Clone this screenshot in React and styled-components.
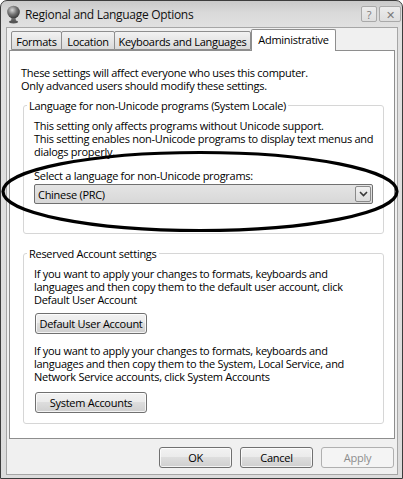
import styled, { createGlobalStyle } from 'styled-components'

const GlobalStyle = createGlobalStyle`
  html, body { margin: 0; padding: 0; background: #ffffff; }
  body {
    font-family: "Open Sans", "Noto Sans", sans-serif;
    font-size: 11px;
    letter-spacing: -0.28px;
    color: #000;
  }
  * { box-sizing: border-box; }
`

const Window = styled.div`
  position: relative;
  width: 403px;
  height: 479px;
  border: 1px solid #3c3c3c;
  border-radius: 7px 7px 0 0;
  background: linear-gradient(180deg, #c9c9c9 0, #dadada 12px, #e1e1e1 26px, #dcdcdc 100%);
  padding: 0 4px 3px 5px;
  display: flex;
  flex-direction: column;
`

const TitleBar = styled.div`
  height: 26px;
  display: flex;
  align-items: center;
  gap: 4px;
`

const Title = styled.span`
  font-size: 12px;
  color: #111;
  letter-spacing: -0.3px;
`

const TitleButtons = styled.div`
  margin-left: auto;
  margin-right: -3px;
  align-self: flex-start;
  margin-top: 5px;
  display: flex;
  gap: 2px;
`

const TitleButton = styled.div`
  width: ${p => p.w}px;
  height: 16px;
  border: 1px solid #a9a9a9;
  border-radius: 2px;
  background: linear-gradient(#ececec, #dedede);
  display: flex;
  align-items: center;
  justify-content: center;
  color: #7a7a7a;
  font-size: 11px;
`

const Client = styled.div`
  flex: 1;
  border: 1px solid #a6a6a6;
  background: #f0f0f0;
  padding: 1px 2px 0 2px;
  display: flex;
  flex-direction: column;
`

const TabStrip = styled.div`
  height: 21px;
  display: flex;
  align-items: flex-end;
  padding-left: 2px;
  position: relative;
  z-index: 1;
`

const Tab = styled.div`
  width: ${p => p.w}px;
  height: ${p => (p.active ? 22 : 19)}px;
  margin-left: ${p => (p.first || p.active ? 0 : -1)}px;
  margin-bottom: ${p => (p.active ? -1 : 0)}px;
  border: 1px solid #8e8e8e;
  border-bottom: ${p => (p.active ? 'none' : '1px solid #8e8e8e')};
  border-radius: 2px 2px 0 0;
  background: ${p => (p.active ? '#ffffff' : 'linear-gradient(#f2f2f2, #e6e6e6 50%, #dadada)')};
  display: flex;
  align-items: ${p => (p.active ? 'flex-start' : 'center')};
  padding-top: ${p => (p.active ? 2 : 1)}px;
  justify-content: center;
  white-space: nowrap;
`

const Panel = styled.div`
  height: 389px;
  border: 1px solid #8e8e8e;
  background: #ffffff;
  padding: 15px 10px 0 11px;
`

const Text = styled.div`
  line-height: 13px;
  margin-top: ${p => p.mt || 0}px;
  white-space: nowrap;
`

const Group = styled.div`
  margin: ${p => p.mt}px 0 0 2px;
  border: 1px solid #d6d6d6;
  border-radius: 3px;
  padding: 0 10px ${p => p.pb}px 10px;
`

const GroupLabel = styled.div`
  width: fit-content;
  margin: -7px 0 0 -7px;
  padding: 0 2px;
  background: #ffffff;
  line-height: 13px;
`

const Combo = styled.div`
  margin-top: 2px;
  height: 20px;
  border: 1px solid #707070;
  border-radius: 2px;
  background: linear-gradient(#e4e4e4, #d8d8d8);
  display: flex;
  align-items: center;
  padding-left: 3px;
`

const ComboArrow = styled.div`
  margin-left: auto;
  margin-right: 1px;
  width: 16px;
  height: 16px;
  border: 1px solid #8a8a8a;
  border-radius: 2px;
  background: linear-gradient(#f0f0f0, #dddddd);
  display: flex;
  align-items: center;
  justify-content: center;
`

const Button = styled.button`
  display: block;
  width: ${p => p.w}px;
  height: 21px;
  margin: ${p => p.mt || 0}px 0 0 ${p => p.ml || 0}px;
  padding: 0;
  font: inherit;
  letter-spacing: inherit;
  color: #000;
  border: 1px solid #707070;
  border-radius: 3px;
  background: linear-gradient(#f2f2f2 0%, #ebebeb 45%, #dddddd 50%, #cfcfcf 100%);
  box-shadow: inset 0 0 0 1px rgba(255, 255, 255, 0.75);

  &:disabled {
    color: #8d8d8d;
    border-color: #b0b0b0;
    background: #f4f4f4;
    box-shadow: none;
  }
`

const Footer = styled.div`
  display: flex;
  justify-content: flex-end;
  gap: 8px;
  padding: 8px 1px 0 0;
`

const Mark = styled.svg`
  position: absolute;
  left: 0;
  top: 0;
  pointer-events: none;
`

const GlobeIcon = () => (
  <svg width="15" height="19" viewBox="0 0 15 19">
    <defs>
      <radialGradient id="g" cx="0.4" cy="0.35" r="0.7">
        <stop offset="0" stopColor="#d8d8d8" />
        <stop offset="0.5" stopColor="#777" />
        <stop offset="1" stopColor="#333" />
      </radialGradient>
    </defs>
    <circle cx="7.5" cy="7" r="6.3" fill="url(#g)" />
    <path d="M5.5 13 L9.5 13 L10 16 L5 16 Z" fill="#666" />
    <ellipse cx="7.5" cy="16.8" rx="4.5" ry="1.6" fill="#555" />
  </svg>
)

const Chevron = () => (
  <svg width="9" height="6" viewBox="0 0 9 6">
    <path d="M1 1 L4.5 4.5 L8 1" fill="none" stroke="#3a3a3a" strokeWidth="1.6" />
  </svg>
)

export default function App() {
  return (
    <>
      <GlobalStyle />
      <Window>
        <TitleBar>
          <GlobeIcon />
          <Title>Regional and Language Options</Title>
          <TitleButtons>
            <TitleButton w={16}>?</TitleButton>
            <TitleButton w={22}>✕</TitleButton>
          </TitleButtons>
        </TitleBar>
        <Client>
          <TabStrip>
            <Tab w={51} first>Formats</Tab>
            <Tab w={54}>Location</Tab>
            <Tab w={137}>Keyboards and Languages</Tab>
            <Tab w={85} active>Administrative</Tab>
          </TabStrip>
          <Panel>
            <Text>These settings will affect everyone who uses this computer.</Text>
            <Text>Only advanced users should modify these settings.</Text>
            <Group mt={13} pb={29}>
              <GroupLabel>Language for non-Unicode programs (System Locale)</GroupLabel>
              <Text mt={7}>This setting only affects programs without Unicode support.</Text>
              <Text>This setting enables non-Unicode programs to display text menus and</Text>
              <Text>dialogs properly.</Text>
              <Text mt={11}>Select a language for non-Unicode programs:</Text>
              <Combo>
                Chinese (PRC)
                <ComboArrow><Chevron /></ComboArrow>
              </Combo>
            </Group>
            <Group mt={19} pb={10}>
              <GroupLabel>Reserved Account settings</GroupLabel>
              <Text mt={7}>If you want to apply your changes to formats, keyboards and</Text>
              <Text>languages and then copy them to the default user account, click</Text>
              <Text>Default User Account</Text>
              <Button w={112} mt={7} ml={1}>Default User Account</Button>
              <Text mt={10}>If you want to apply your changes to formats, keyboards and</Text>
              <Text>languages and then copy them to the System, Local Service, and</Text>
              <Text>Network Service accounts, click System Accounts</Text>
              <Button w={112} mt={9} ml={1}>System Accounts</Button>
            </Group>
          </Panel>
          <Footer>
            <Button w={73}>OK</Button>
            <Button w={73}>Cancel</Button>
            <Button w={73} disabled>Apply</Button>
          </Footer>
        </Client>
        <Mark width="401" height="477" viewBox="0 0 401 477">
          <ellipse cx="199" cy="190.5" rx="197" ry="39" fill="none" stroke="#000" strokeWidth="3.2" />
        </Mark>
      </Window>
    </>
  )
}
